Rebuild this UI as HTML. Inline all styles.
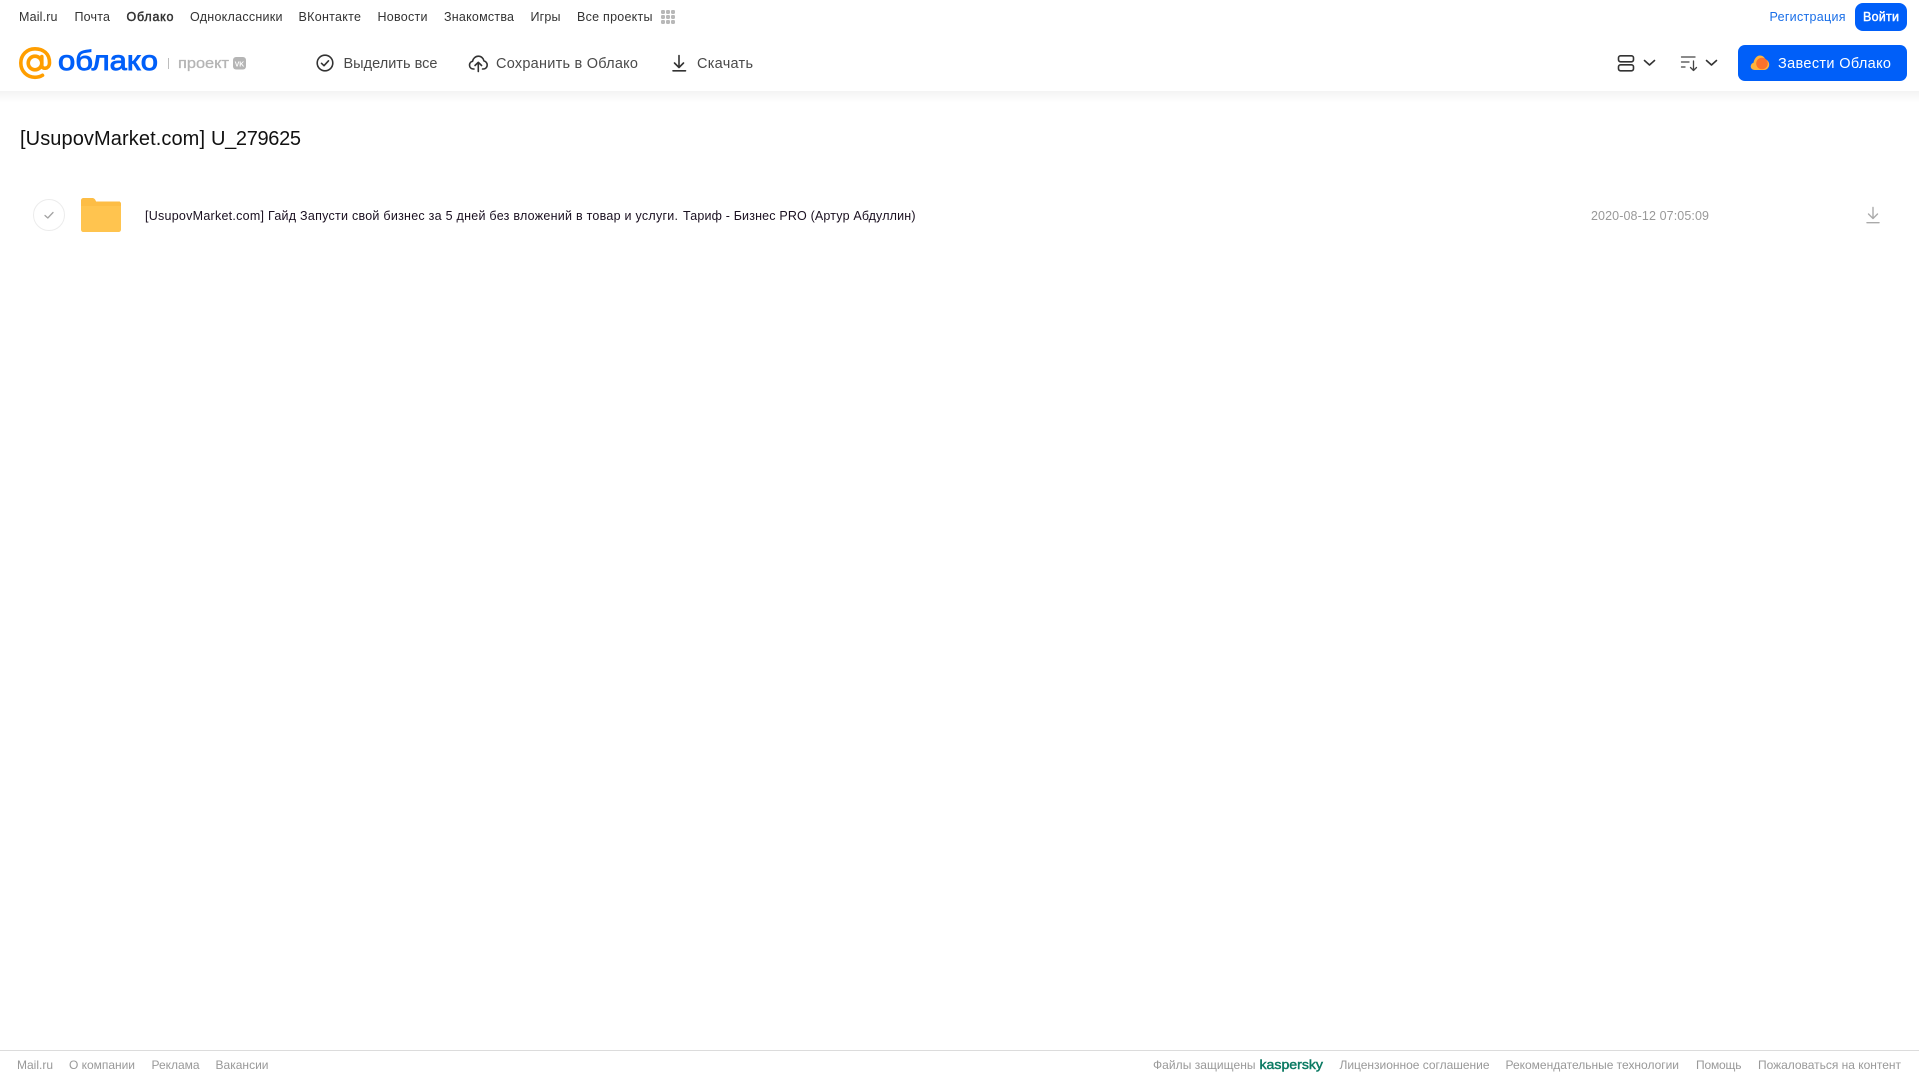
<!DOCTYPE html>
<html lang="ru">
<head>
<meta charset="utf-8">
<title>Облако</title>
<style>
html,body{margin:0;padding:0;background:#fff;width:1919px;height:1079px;overflow:hidden}
svg{position:absolute;left:0;top:0;display:block}
text{font-family:"Liberation Sans",Arial,sans-serif;white-space:pre}
.n{font-size:12.5px;fill:#333}
.t{font-size:14.500px;fill:#4a4a4a}
.f{font-size:12px;fill:#999}
</style>
</head>
<body>
<svg width="1919" height="1079" viewBox="0 0 1919 1079" xmlns="http://www.w3.org/2000/svg">
<defs>
<linearGradient id="sh" x1="0" y1="0" x2="0" y2="1"><stop offset="0" stop-color="#f3f3f3"/><stop offset="1" stop-color="#fff"/></linearGradient>
</defs>
<rect x="0" y="91" width="1919" height="12" fill="url(#sh)"/>

<!-- top nav -->
<text class="n" x="19" y="21" textLength="38.500" lengthAdjust="spacing">Mail.ru</text>
<text class="n" x="74.500" y="21" textLength="35.500" lengthAdjust="spacing">Почта</text>
<text class="n" x="126.500" y="21" textLength="47" lengthAdjust="spacing" stroke="#333" stroke-width=".45">Облако</text>
<text class="n" x="190" y="21" textLength="92.500" lengthAdjust="spacing">Одноклассники</text>
<text class="n" x="298.500" y="21" textLength="62.500" lengthAdjust="spacing">ВКонтакте</text>
<text class="n" x="377.500" y="21" textLength="50" lengthAdjust="spacing">Новости</text>
<text class="n" x="444" y="21" textLength="70" lengthAdjust="spacing">Знакомства</text>
<text class="n" x="530.500" y="21" textLength="30" lengthAdjust="spacing">Игры</text>
<text class="n" x="577" y="21" textLength="75.500" lengthAdjust="spacing">Все проекты</text>
<g fill="#b8b8b8">
<rect x="661" y="10" width="4" height="4" rx="1.200"/><rect x="666" y="10" width="4" height="4" rx="1.200"/><rect x="671" y="10" width="4" height="4" rx="1.200"/>
<rect x="661" y="15" width="4" height="4" rx="1.200"/><rect x="666" y="15" width="4" height="4" rx="1.200"/><rect x="671" y="15" width="4" height="4" rx="1.200"/>
<rect x="661" y="20" width="4" height="4" rx="1.200"/><rect x="666" y="20" width="4" height="4" rx="1.200"/><rect x="671" y="20" width="4" height="4" rx="1.200"/>
</g>
<text x="1769.500" y="21" font-size="12.500" fill="#1a6fe8" textLength="76" lengthAdjust="spacing">Регистрация</text>
<rect x="1855" y="3" width="52" height="28" rx="8" fill="#005ff9"/>
<text x="1863" y="21" font-size="12.500" fill="#fff" stroke="#fff" stroke-width=".4" textLength="36" lengthAdjust="spacing">Войти</text>

<!-- logo -->
<g fill="none" stroke="#ff9e00" stroke-width="3.600" stroke-linecap="round">
<circle cx="35" cy="63" r="6.800"/>
<path d="M41.800 56.500V65.500C41.800 69.500 49.300 69.500 49.500 63C49.800 53.500 43 48.800 35 48.800C26.800 48.800 20.800 55 20.800 63C20.800 71.300 27 77.300 35 77.300C38 77.300 40.500 76.600 42.500 75.300"/>
</g>
<text x="58" y="70" font-size="28" fill="#005ff9" stroke="#005ff9" stroke-width=".9" textLength="100" lengthAdjust="spacingAndGlyphs">облако</text>
<rect x="168" y="58" width="1" height="11" fill="#bdbdbd"/>
<text x="178" y="68" font-size="14.500" fill="#b5b5b5" stroke="#b5b5b5" stroke-width=".3" textLength="51" lengthAdjust="spacingAndGlyphs">проект</text>
<rect x="233" y="57" width="13" height="12.500" rx="3" fill="#b5b5b5"/>
<text x="234.700" y="66.300" font-size="7.500" font-weight="700" fill="#fff" textLength="9.500" lengthAdjust="spacingAndGlyphs">VK</text>

<!-- toolbar -->
<g fill="none" stroke="#333" stroke-width="1.600" stroke-linecap="round" stroke-linejoin="round">
<circle cx="325" cy="63" r="7.800"/>
<path d="M321.500 63.300L324 65.700L328.500 60.800"/>
<path d="M474 69H473.500C470.800 69 469.500 67 469.500 65C469.500 63 471 61.500 472.500 61.300C473 58.500 475.500 56.200 478.300 56.200C481.300 56.200 483.500 58.300 484 61C485.800 61.300 487.200 63 487.200 65C487.200 67 485.800 69 483.300 69H482.500"/>
<path d="M478.300 71.500V62.500M475 65.500L478.300 62.300L481.600 65.500"/>
<path d="M679 55.500V67.500M674.500 63L679 67.500L683.500 63"/>
<path d="M673 70.800H685.500"/>
</g>
<text class="t" x="343.500" y="68" textLength="94" lengthAdjust="spacing">Выделить все</text>
<text class="t" x="496" y="68" textLength="142" lengthAdjust="spacing">Сохранить в Облако</text>
<text class="t" x="697" y="68" textLength="56" lengthAdjust="spacing">Скачать</text>

<!-- right controls -->
<g fill="none" stroke="#333" stroke-width="1.600" stroke-linecap="round" stroke-linejoin="round">
<rect x="1618.500" y="55.800" width="15" height="6" rx="2"/>
<rect x="1618.500" y="64.800" width="15" height="6" rx="2"/>
<path d="M1644.500 60.500L1649.500 65L1654.500 60.500"/>
<path d="M1706.500 60.500L1711.500 65L1716.500 60.500"/>
</g>
<g fill="none" stroke="#444" stroke-width="1.300" stroke-linecap="round" stroke-linejoin="round">
<path d="M1681.500 57H1695M1681.500 62H1689M1681.500 67H1685"/>
<path d="M1693.500 61V70.500M1690.500 67.500L1693.500 70.500L1696.500 67.500"/>
</g>
<rect x="1738" y="45" width="169" height="36" rx="7" fill="#005ff9"/>
<path d="M1755 70C1752 70 1750.500 68 1750.700 66C1751 64 1752.300 63 1753.500 62.700C1754 59.500 1756.500 55.500 1760 55.500C1763 55.500 1764.500 57.500 1765.500 59.500C1767.500 60 1769.200 62 1769.200 64.500C1769.200 67.500 1767 70 1764 70Z" fill="#ffb33b"/>
<circle cx="1762" cy="63.500" r="5.800" fill="#f9722c"/>
<text x="1778" y="68" font-size="14.500" fill="#fff" textLength="113" lengthAdjust="spacing">Завести Облако</text>

<!-- title -->
<text x="20" y="145" font-size="20" fill="#111" textLength="185" lengthAdjust="spacing">[UsupovMarket.com]</text>
<text x="211" y="145" font-size="20" fill="#111" textLength="90" lengthAdjust="spacing">U_279625</text>

<!-- row -->
<circle cx="49" cy="215" r="15.500" fill="#fff" stroke="#ececec" stroke-width="1"/>
<path d="M45 215.500L47.800 218L53 212.500" fill="none" stroke="#a3a3a3" stroke-width="1.300" stroke-linecap="round" stroke-linejoin="round"/>
<path d="M81 201C81 199 82 198 84 198H92C94 198 95 199 96 201.500H119C120 201.500 121 202.500 121 204V229.500C121 231 120 232 118.500 232H83.500C82 232 81 231 81 229.500Z" fill="#ffc44f"/>
<path d="M81 206H121V204C121 202.500 120 201.500 119 201.500H96C95 199 94 198 92 198H84C82 198 81 199 81 201Z" fill="#fdbd45"/>
<text x="145" y="220" font-size="12.500" fill="#1a1020" textLength="533" lengthAdjust="spacing">[UsupovMarket.com] Гайд Запусти свой бизнес за 5 дней без вложений в товар и услуги.</text>
<text x="683" y="220" font-size="12.500" fill="#1a1020" textLength="232.500" lengthAdjust="spacing">Тариф - Бизнес PRO (Артур Абдуллин)</text>
<text x="1591" y="220" font-size="12.500" fill="#999" textLength="118" lengthAdjust="spacing">2020-08-12 07:05:09</text>
<g fill="none" stroke="#aaa" stroke-width="1.400" stroke-linecap="round" stroke-linejoin="round">
<path d="M1873 207.500V218.500M1868.500 214L1873 218.500L1877.500 214"/>
<path d="M1867 222.700H1879"/>
</g>

<!-- footer -->
<rect x="0" y="1050" width="1919" height="1" fill="#dcdcdc"/>
<text class="f" x="17" y="1069" textLength="36" lengthAdjust="spacing">Mail.ru</text>
<text class="f" x="69" y="1069" textLength="66" lengthAdjust="spacing">О компании</text>
<text class="f" x="151.500" y="1069" textLength="48" lengthAdjust="spacing">Реклама</text>
<text class="f" x="215.500" y="1069" textLength="53" lengthAdjust="spacing">Вакансии</text>
<text class="f" x="1153" y="1069" textLength="102.500" lengthAdjust="spacing">Файлы защищены</text>
<text x="1259.500" y="1069" font-size="13" fill="#0b7a63" stroke="#0b7a63" stroke-width=".45" textLength="63.500" lengthAdjust="spacingAndGlyphs">kaspersky</text>
<text class="f" x="1339.500" y="1069" textLength="150" lengthAdjust="spacing">Лицензионное соглашение</text>
<text class="f" x="1505.500" y="1069" textLength="173.500" lengthAdjust="spacing">Рекомендательные технологии</text>
<text class="f" x="1696" y="1069" textLength="45.500" lengthAdjust="spacing">Помощь</text>
<text class="f" x="1758" y="1069" textLength="143" lengthAdjust="spacing">Пожаловаться на контент</text>
</svg>
</body>
</html>
